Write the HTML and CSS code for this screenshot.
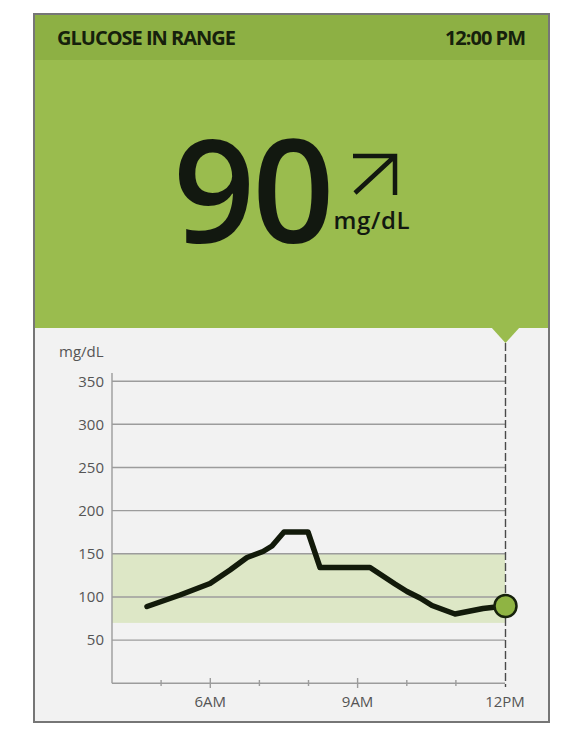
FILE: index.html
```html
<!DOCTYPE html>
<html lang="en">
<head>
    <meta charset="UTF-8">
    <meta name="viewport" content="width=device-width, initial-scale=1.0">
    <title>Glucose</title>
    <link rel="stylesheet" href="styles.css">
</head>
<body>
    <div class="card">
        <div class="status-bar">
            <span>GLUCOSE IN RANGE</span>
            <span>12:00 PM</span>
        </div>

        <div class="reading">
            <div class="reading-value">90</div>
            <div class="reading-side">
                <svg class="trend-arrow" width="48" height="46" viewBox="0 0 48 46">
                    <path d="M2 4 H44 V43 M44 4 L4 41" />
                </svg>
                <span class="reading-unit">mg/dL</span>
            </div>
        </div>

        <div class="trend">
            <svg class="trend-chart" width="513" height="393" viewBox="35 328 513 393">
                <!-- target range 70-150 -->
                <rect class="range" x="112" y="553.8" width="393" height="69.1" />

                <g class="grid">
                    <line x1="112" y1="381.2" x2="505" y2="381.2" />
                    <line x1="112" y1="424.3" x2="505" y2="424.3" />
                    <line x1="112" y1="467.5" x2="505" y2="467.5" />
                    <line x1="112" y1="510.6" x2="505" y2="510.6" />
                    <line x1="112" y1="553.8" x2="505" y2="553.8" />
                    <line x1="112" y1="597" x2="505" y2="597" />
                    <line x1="112" y1="640.1" x2="505" y2="640.1" />
                </g>

                <g class="axis">
                    <line x1="112" y1="373" x2="112" y2="683.3" />
                    <line x1="112" y1="683.3" x2="505" y2="683.3" />
                    <line x1="161.1" y1="680" x2="161.1" y2="686" />
                    <line x1="210.3" y1="678" x2="210.3" y2="688" />
                    <line x1="259.4" y1="680" x2="259.4" y2="686" />
                    <line x1="308.5" y1="680" x2="308.5" y2="686" />
                    <line x1="357.6" y1="678" x2="357.6" y2="688" />
                    <line x1="406.8" y1="680" x2="406.8" y2="686" />
                    <line x1="455.9" y1="680" x2="455.9" y2="686" />
                </g>

                <g class="y-labels">
                    <text x="59" y="357">mg/dL</text>
                    <text class="num" x="104" y="386.5">350</text>
                    <text class="num" x="104" y="429.6">300</text>
                    <text class="num" x="104" y="472.8">250</text>
                    <text class="num" x="104" y="515.9">200</text>
                    <text class="num" x="104" y="559.1">150</text>
                    <text class="num" x="104" y="602.3">100</text>
                    <text class="num" x="104" y="645.4">50</text>
                </g>

                <g class="x-labels">
                    <text x="210.3" y="707">6AM</text>
                    <text x="357.6" y="707">9AM</text>
                    <text x="505" y="707">12PM</text>
                </g>

                <!-- pointer from the reading panel + current time marker -->
                <polygon class="pointer" points="491,327 520,327 505.5,343" />
                <line class="now-line" x1="505.5" y1="343" x2="505.5" y2="687" />

                <polyline class="curve" points="147,606.5 180,595 210,583.5 230,570 247,557.5 263,551.5 272,546 284,532 308,532 320,567.5 370,567.5 395,584 407,591.5 420,598 432,605.5 455,614 483,608.5 505,606" />
                <circle class="now-dot" cx="505.5" cy="606" r="11" />
            </svg>
        </div>
    </div>
</body>
</html>
```

FILE: styles.css
```css
body {
margin: 0;
background-color: #ffffff;
font-family: "Open Sans", "Liberation Sans", sans-serif;
}

/* outer card */
.card {
width: 517px;
height: 710px;
margin: 13px 0 0 33px;
border: 2px solid #767676;
box-sizing: border-box;
display: flex;
flex-direction: column;
background-color: #f2f2f2;
}

/* top bar with status and time */
.status-bar {
height: 45px;
flex-shrink: 0;
display: flex;
align-items: center;
justify-content: space-between;
padding: 0 23px 0 22px;
background-color: #8db044;
color: #16200c;
font-size: 20px;
font-weight: 700;
letter-spacing: -1px;
}

/* big reading */
.reading {
height: 268px;
flex-shrink: 0;
box-sizing: border-box;
padding-top: 55px;
display: flex;
justify-content: center;
align-items: flex-start;
gap: 2px;
background-color: #9abc4e;
color: #121810;
}

.reading-value {
font-size: 144px;
font-weight: 600;
line-height: 1;
letter-spacing: -3px;
}

.reading-side {
display: flex;
flex-direction: column;
align-items: flex-start;
}

.trend-arrow {
margin: 37px 0 0 17px;
}

.trend-arrow path {
fill: none;
stroke: #121810;
stroke-width: 4.5;
stroke-linejoin: miter;
}

.reading-unit {
margin-top: 10px;
font-size: 24px;
font-weight: 600;
line-height: 1;
letter-spacing: 0.6px;
}

/* chart */
.trend {
flex: 1;
}

.trend-chart {
display: block;
}

.range {
fill: #dde7c6;
}

.grid line,
.axis line {
stroke: #9c9c9c;
stroke-width: 1.4;
}

.y-labels text,
.x-labels text {
font-family: "Open Sans", "Liberation Sans", sans-serif;
font-size: 15px;
fill: #555555;
}

.y-labels .num {
text-anchor: end;
}

.x-labels text {
text-anchor: middle;
}

.pointer {
fill: #9abc4e;
}

.now-line {
stroke: #4a4a4a;
stroke-width: 1.4;
stroke-dasharray: 8 3;
}

.curve {
fill: none;
stroke: #121a0a;
stroke-width: 5.5;
stroke-linejoin: round;
stroke-linecap: round;
}

.now-dot {
fill: #8fb443;
stroke: #17220c;
stroke-width: 2.5;
}
```
